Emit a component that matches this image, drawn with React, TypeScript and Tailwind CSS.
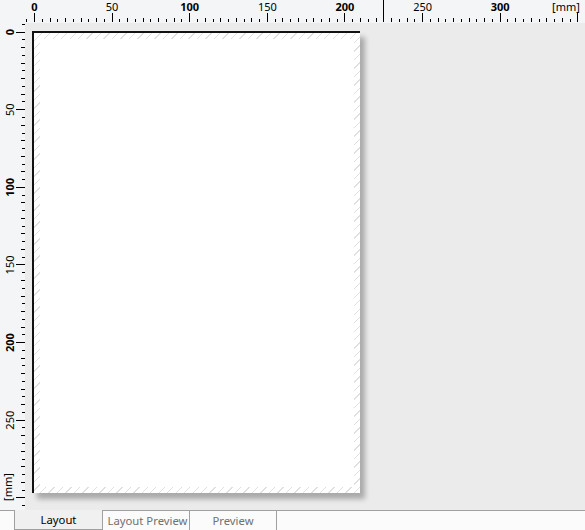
import React from "react";

const MM = 1.5524; // pixels per millimetre on screen
const X0 = 34; // x of 0 mm on the horizontal ruler
const Y0 = 31.6; // y of 0 mm on the vertical ruler
const FONT = '"Noto Sans", "Open Sans", sans-serif';

function tickLen(m: number) {
  if (m % 50 === 0) return 9;
  if (m % 10 === 0) return 4;
  return 3;
}

function TopRuler() {
  const ticks: number[] = [];
  for (let m = -5; m <= 355; m += 5) ticks.push(m);
  const labels = [0, 50, 100, 150, 200, 250, 300];
  return (
    <svg width={585} height={23} className="block">
      <rect x={0} y={0} width={585} height={23} fill="#f4f5f7" />
      {ticks.map((m) => {
        const x = Math.round(X0 + m * MM);
        const l = tickLen(m);
        return <rect key={m} x={x} y={22 - l} width={1} height={l} fill="#000" />;
      })}
      {labels.map((m) => (
        <text
          key={m}
          x={X0 + m * MM + 0.5}
          y={11}
          textAnchor="middle"
          fontFamily={FONT}
          fontSize={11}
          fontWeight={m % 100 === 0 ? 700 : 400}
          fill="#000"
        >
          {m}
        </text>
      ))}
      <text x={566} y={11} textAnchor="middle" fontFamily={FONT} fontSize={11} fill="#000">
        [mm]
      </text>
      {/* cursor position marker */}
      <rect x={383} y={0} width={1} height={22} fill="#000" />
    </svg>
  );
}

function LeftRuler() {
  const ticks: number[] = [];
  for (let m = -5; m <= 305; m += 5) ticks.push(m);
  const labels = [0, 50, 100, 150, 200, 250];
  const top = 23;
  return (
    <svg width={25} height={487} className="block shrink-0">
      <rect x={0} y={0} width={25} height={487} fill="#f4f5f7" />
      {ticks.map((m) => {
        const y = Math.round(Y0 + m * MM) - top;
        const l = tickLen(m);
        if (y < 0 || y > 486) return null;
        return <rect key={m} x={25 - l} y={y} width={l} height={1} fill="#000" />;
      })}
      {labels.map((m) => (
        <text
          key={m}
          transform={`translate(14 ${Y0 + m * MM - top + 0.5}) rotate(-90)`}
          textAnchor="middle"
          fontFamily={FONT}
          fontSize={11}
          fontWeight={m % 100 === 0 ? 700 : 400}
          fill="#000"
        >
          {m}
        </text>
      ))}
      <text
        transform={`translate(12 ${487 - 23}) rotate(-90)`}
        textAnchor="middle"
        fontFamily={FONT}
        fontSize={11}
        fill="#000"
      >
        [mm]
      </text>
    </svg>
  );
}

function Page() {
  return (
    <div className="ml-[7px] mt-[8px] h-[462px] w-[328px] border-l-2 border-t-2 border-[#111] bg-white bg-[repeating-linear-gradient(135deg,#ffffff_0px,#ffffff_5px,#e0e0e0_5px,#e0e0e0_6px)] p-[6px] shadow-[5px_6px_5px_rgba(0,0,0,0.28)]">
      <div className="h-full w-full bg-white" />
    </div>
  );
}

function Tabs() {
  return (
    <div
      className="flex h-[20px] text-[11.3px] leading-[18px]"
      style={{ fontFamily: FONT }}
    >
      <div className="w-[15px] border-r border-t border-[#a0a0a0] bg-[#fbfbfb]" />
      <div className="flex w-[88px] items-center justify-center border-b border-r border-[#a0a0a0] bg-[#f0f0f0] text-black">
        Layout
      </div>
      <div className="flex w-[87px] items-center justify-center border-r border-t border-[#a0a0a0] bg-[#fbfbfb] pl-[3px] text-[#707070]">
        Layout Preview
      </div>
      <div className="flex w-[87px] items-center justify-center border-r border-t border-[#a0a0a0] bg-[#fbfbfb] text-[#707070]">
        Preview
      </div>
      <div className="flex-1 border-t border-[#a0a0a0] bg-[#fbfbfb]" />
    </div>
  );
}

export default function App() {
  return (
    <div className="flex h-[530px] w-[585px] flex-col overflow-hidden bg-[#ebebeb]">
      <TopRuler />
      <div className="flex h-[487px]">
        <LeftRuler />
        <div className="flex-1 overflow-hidden bg-[#ebebeb]">
          <Page />
        </div>
      </div>
      <Tabs />
    </div>
  );
}
